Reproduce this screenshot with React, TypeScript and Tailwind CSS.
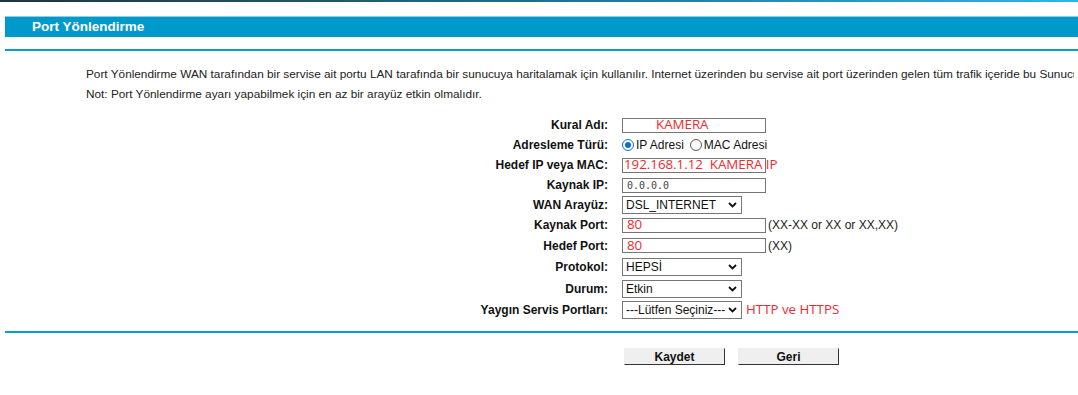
const red = "text-[#ee2a2f] font-['Open_Sans','Liberation_Sans',sans-serif] text-[13.3px]";

function Chevron() {
  return (
    <svg width="9" height="6" viewBox="0 0 9 6" className="shrink-0">
      <path d="M1 1 L4.5 4.5 L8 1" fill="none" stroke="#111" strokeWidth="1.8" />
    </svg>
  );
}

function Select({ value }: { value: string }) {
  return (
    <div className="flex items-center justify-between w-[120px] h-[18px] border border-[#767676] bg-white pl-[3px] pr-[4px] text-[12px] text-[#111] whitespace-nowrap">
      <span className="leading-none">{value}</span>
      <Chevron />
    </div>
  );
}

function TextBox({ children, className = "" }: { children?: React.ReactNode; className?: string }) {
  return (
    <div className={`flex items-center w-[144px] h-[15px] border border-[#767676] bg-white whitespace-nowrap ${className}`}>
      {children}
    </div>
  );
}

function Radio({ on }: { on?: boolean }) {
  return (
    <span
      className={`inline-flex items-center justify-center w-[12px] h-[12px] rounded-full border ${
        on ? "border-[#0a6fd6]" : "border-[#555]"
      } bg-white`}
    >
      {on && <span className="w-[6px] h-[6px] rounded-full bg-[#0a6fd6]" />}
    </span>
  );
}

const rows: { label: string; h: string; field: React.ReactNode }[] = [
  {
    label: "Kural Adı:",
    h: "h-[20px]",
    field: (
      <TextBox className="pl-[33px]">
        <span className={red}>KAMERA</span>
      </TextBox>
    ),
  },
  {
    label: "Adresleme Türü:",
    h: "h-[20px]",
    field: (
      <div className="flex items-center text-[12px] text-[#111]">
        <Radio on />
        <span className="ml-[2px]">IP Adresi</span>
        <span className="ml-[6px] flex">
          <Radio />
        </span>
        <span className="ml-[2px]">MAC Adresi</span>
      </div>
    ),
  },
  {
    label: "Hedef IP veya MAC:",
    h: "h-[20px]",
    field: (
      <TextBox className="pl-[1px]">
        <span className={red}>192.168.1.12&nbsp; KAMERA IP</span>
      </TextBox>
    ),
  },
  {
    label: "Kaynak IP:",
    h: "h-[20px]",
    field: (
      <TextBox className="pl-[4px]">
        <span className="font-['DejaVu_Sans_Mono',monospace] text-[10px] text-[#444]">0.0.0.0</span>
      </TextBox>
    ),
  },
  { label: "WAN Arayüz:", h: "h-[20px]", field: <Select value="DSL_INTERNET" /> },
  {
    label: "Kaynak Port:",
    h: "h-[20px]",
    field: (
      <div className="flex items-center">
        <TextBox className="pl-[4px]">
          <span className={red}>80</span>
        </TextBox>
        <span className="ml-[2px] text-[12px] text-[#222]">(XX-XX or XX or XX,XX)</span>
      </div>
    ),
  },
  {
    label: "Hedef Port:",
    h: "h-[21px]",
    field: (
      <div className="flex items-center">
        <TextBox className="pl-[4px]">
          <span className={red}>80</span>
        </TextBox>
        <span className="ml-[2px] text-[12px] text-[#222]">(XX)</span>
      </div>
    ),
  },
  { label: "Protokol:", h: "h-[22px]", field: <Select value="HEPSİ" /> },
  { label: "Durum:", h: "h-[21px]", field: <Select value="Etkin" /> },
  {
    label: "Yaygın Servis Portları:",
    h: "h-[21px]",
    field: (
      <div className="flex items-center">
        <Select value="---Lütfen Seçiniz---" />
        <span className={`${red} ml-[4px]`}>HTTP ve HTTPS</span>
      </div>
    ),
  },
];

export default function App() {
  return (
    <div className="w-[1078px] h-[395px] overflow-hidden bg-white font-['Liberation_Sans',Arial,sans-serif]">
      {/* top strip */}
      <div className="h-[2px] bg-linear-to-r from-[#1d3442] via-[#1f6f8f] to-[#2bb8e2]" />

      {/* title bar */}
      <div className="mt-[14px] ml-[5px] h-[21px] bg-[#0099cc] border-t border-[#8fd0e8] flex items-center pl-[27px]">
        <span className="text-white font-bold text-[13.5px]">Port Yönlendirme</span>
      </div>
      <div className="mt-[12px] ml-[5px] h-[2px] bg-[#0a9bd0]" />

      {/* description */}
      <div className="mt-[13px] pl-[86px] pr-[4px] text-[11.8px] leading-[20px] text-[#222] whitespace-nowrap overflow-hidden">
        <p className="overflow-hidden">
          Port Yönlendirme WAN tarafından bir servise ait portu LAN tarafında bir sunucuya haritalamak için kullanılır. Internet
          üzerinden bu servise ait port üzerinden gelen tüm trafik içeride bu Sunucuya yönlendirilir.
        </p>
        <p>Not: Port Yönlendirme ayarı yapabilmek için en az bir arayüz etkin olmalıdır.</p>
      </div>

      {/* form */}
      <div className="mt-[11px] flex flex-col">
        {rows.map((r) => (
          <div key={r.label} className={`flex items-center ${r.h}`}>
            <div className="w-[608px] text-right font-bold text-[12px] text-[#111]">{r.label}</div>
            <div className="ml-[14px]">{r.field}</div>
          </div>
        ))}
      </div>

      <div className="mt-[11px] ml-[5px] h-[2px] bg-[#0a9bd0]" />

      {/* buttons */}
      <div className="mt-[15px] flex pl-[624px] gap-[13px]">
        <button className="w-[101px] h-[17px] bg-[#efefef] border border-[#eee] border-r-[#333] border-b-[#333] text-[12px] font-bold text-[#111] leading-none">
          Kaydet
        </button>
        <button className="w-[101px] h-[17px] bg-[#efefef] border border-[#eee] border-r-[#333] border-b-[#333] text-[12px] font-bold text-[#111] leading-none">
          Geri
        </button>
      </div>
    </div>
  );
}
